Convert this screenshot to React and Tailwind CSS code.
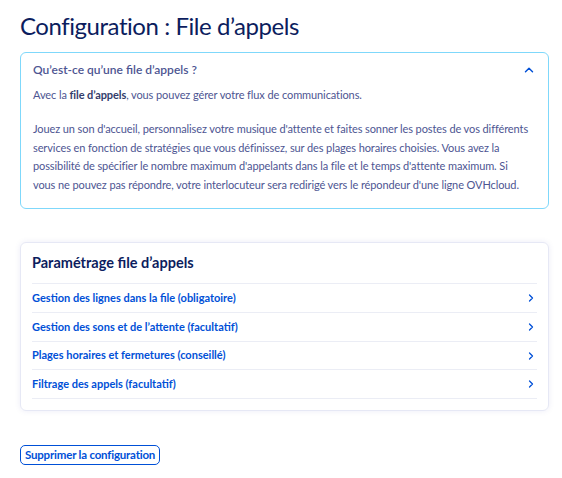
import { ChevronUp, ChevronRight } from "lucide-react";

const rows = [
  "Gestion des lignes dans la file (obligatoire)",
  "Gestion des sons et de l’attente (facultatif)",
  "Plages horaires et fermetures (conseillé)",
  "Filtrage des appels (facultatif)",
];

export default function App() {
  return (
    <div className="min-h-screen bg-white px-5 pt-[9px] font-['Lato',sans-serif] text-[#4d5592]">
      <h1 className="text-[24px] leading-[34px] tracking-[-0.45px] text-[#0c1d5e]">Configuration : File d’appels</h1>

      {/* Info box */}
      <div className="mt-[9px] w-[529px] rounded-md border border-[#7fd8fb] px-3 pt-[7px] pb-[14px]">
        <div className="flex items-center justify-between">
          <h2 className="text-[12px] font-semibold leading-5 text-[#4d5592]">Qu’est-ce qu’une file d’appels ?</h2>
          <ChevronUp className="h-[14px] w-[14px] text-[#0050d7]" strokeWidth={2.5} />
        </div>
        <div className="mt-[6px] whitespace-nowrap text-[11px] leading-[18.6px] tracking-[-0.1px]">
          <p>
            Avec la <strong className="font-bold text-[#333d6b]">file d’appels</strong>, vous pouvez gérer votre flux de communications.
          </p>
          <p className="mt-[15.4px]">
            Jouez un son d'accueil, personnalisez votre musique d'attente et faites sonner les postes de vos différents
            <br />
            services en fonction de stratégies que vous définissez, sur des plages horaires choisies. Vous avez la
            <br />
            possibilité de spécifier le nombre maximum d'appelants dans la file et le temps d'attente maximum. Si
            <br />
            vous ne pouvez pas répondre, votre interlocuteur sera redirigé vers le répondeur d'une ligne OVHcloud.
          </p>
        </div>
      </div>

      {/* Settings card */}
      <div className="mt-[33px] w-[529px] rounded-md border border-[#e6e8f5] px-[11px] pt-[10px] pb-[11px] shadow-[0_0_6px_rgba(0,14,156,0.08)]">
        <h3 className="text-[14.5px] font-bold leading-5 text-[#0c1d5e]">Paramétrage file d’appels</h3>
        <ul className="mt-[10px] border-t border-[#ebedf5]">
          {rows.map((r) => (
            <li key={r} className="flex h-[28.7px] items-center justify-between border-b border-[#ebedf5]">
              <span className="text-[11px] font-bold text-[#0050d7]">{r}</span>
              <ChevronRight className="h-3 w-3 text-[#0050d7]" strokeWidth={2.5} />
            </li>
          ))}
        </ul>
      </div>

      <button className="mt-[34px] h-5 rounded-[5px] border border-[#0050d7] px-[4px] text-[11.5px] font-bold leading-[14px] tracking-[-0.2px] text-[#0050d7]">
        Supprimer la configuration
      </button>
    </div>
  );
}
